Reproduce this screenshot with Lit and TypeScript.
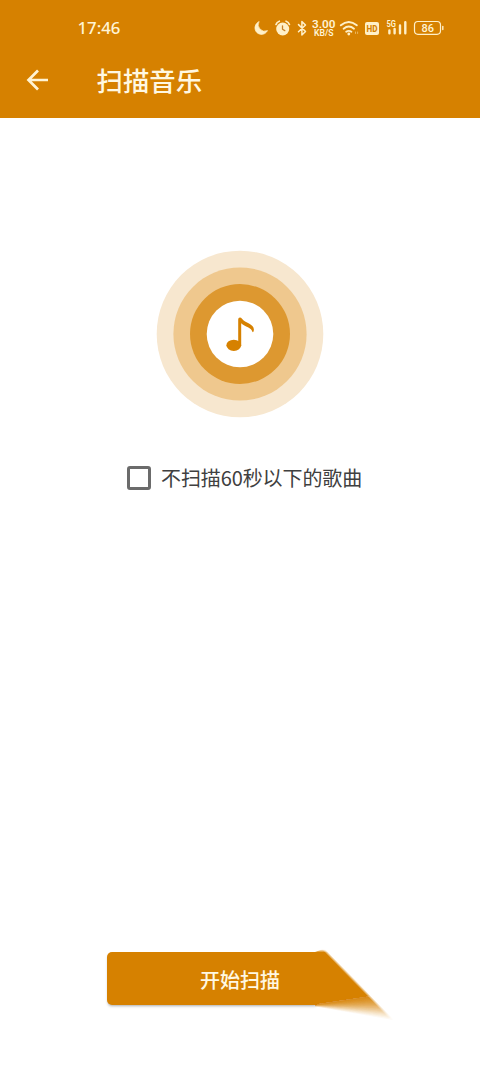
import { LitElement, html, svg, css } from "lit";
import { customElement, state } from "lit/decorators.js";

@customElement("status-bar")
class StatusBar extends LitElement {
  static styles = css`
    :host { display: flex; height: 36px; padding: 10px 36px 0 77.500px; align-items: center; justify-content: space-between; color: #fff4d4; }
    .time { font: 500 16.800px/36px "Noto Sans", sans-serif; }
    svg { display: block; }
    text { font-family: Roboto, sans-serif; fill: #fff4d4; }
    .rate { font-size: 11px; font-weight: 600; }
    .unit { font-size: 8.500px; font-weight: 600; }
    .hd { font-size: 9.500px; font-weight: 800; fill: #d68100; }
    .gen { font-size: 9px; font-weight: 600; }
    .level { font-size: 11px; font-weight: 500; }
  `;
  render() {
    return html`
      <span class="time">17:46</span>
      <svg width="191" height="36" viewBox="253 10 191 36" fill="none" stroke="#fff0c8" stroke-linecap="round" stroke-linejoin="round">
        <path d="M258.800 21.800A6.600 6.600 0 1 0 267.500 30.600A6.600 6.600 0 0 1 258.800 21.800Z" fill="#fff0c8" stroke-width=".7"/>
        <circle cx="282.700" cy="29" r="6.500" fill="#fff0c8" stroke="none"/>
        <path d="M276 24.500q.8-2.600 3.300-3.300M289.400 24.500q-.8-2.600-3.300-3.300" stroke-width="1.700"/>
        <path d="M282.500 25.800v3.500l2.300 1.300" stroke="#c88026" stroke-width="1.300"/>
        <path d="M298.500 24.600l7 6.900-3.600 3.500V21.600l3.600 3.400-7 6.800" stroke-width="1.500"/>
        <text class="rate" stroke="none" x="312" y="27.700" textLength="23.500" lengthAdjust="spacingAndGlyphs">3.00</text>
        <text class="unit" stroke="none" x="314" y="35.800" textLength="19.500" lengthAdjust="spacingAndGlyphs">KB/S</text>
        <path d="M340.800 25.300q8-6.800 16 0M343.600 28.700q5.200-4.200 10.400 0M346.200 31.800q2.600-1.900 5.200 0" stroke-width="1.900"/>
        <circle cx="348.800" cy="34" r="1.400" fill="#fff0c8" stroke="none"/>
        <path d="M355.500 32v1.500M357.600 32v1.500" stroke-width=".8" opacity=".6"/>
        <rect x="365" y="22" width="14" height="13" rx="2" fill="#fff0c8" stroke="none"/>
        <text class="hd" stroke="none" x="366.500" y="32" textLength="11" lengthAdjust="spacingAndGlyphs">HD</text>
        <text class="gen" stroke="none" x="386.500" y="27" textLength="9.500" lengthAdjust="spacingAndGlyphs">5G</text>
        <path d="M389.400 30.500v2.700M394.600 29v4.200M400 25.500v7.700M405.300 22.300v10.900" stroke-width="2.400"/>
        <rect x="414.500" y="21.500" width="26" height="12.800" rx="3.500" stroke-width="1.200"/>
        <path d="M442.800 26.500v3" stroke-width="1.400"/>
        <text class="level" stroke="none" x="421.500" y="32" textLength="12.500" lengthAdjust="spacingAndGlyphs">86</text>
      </svg>
    `;
  }
}

@customElement("scan-emblem")
class ScanEmblem extends LitElement {
  static styles = css`
    :host { display: block; width: 168px; height: 168px; }
    svg { display: block; }
  `;
  render() {
    return html`
      <svg width="168" height="168" viewBox="0 0 168 168">
        <circle cx="84" cy="84" r="83.300" fill="#f7e7cf"/>
        <circle cx="84" cy="84" r="66.600" fill="#efc88e"/>
        <circle cx="84" cy="84" r="50" fill="#dd9830"/>
        <circle cx="84" cy="84" r="33.300" fill="#fff"/>
        <ellipse cx="77.800" cy="95.300" rx="7.400" ry="5.600" fill="#d68100"/>
        <path d="M82.200 95.500V69.500Q82.200 67.500 83.900 67.500Q85.100 67.500 86 68.800C89 73 97.800 73.800 97.900 79.500Q98 82 96.600 82.300C95.800 77.300 88.800 76.800 85.200 73.200V95.500Z" fill="#d68100"/>
      </svg>
    `;
  }
}

const FEATHER = Array.from({ length: 20 }, (_, i) => i / 19);

@customElement("scan-button")
class ScanButton extends LitElement {
  static styles = css`
    :host { display: flex; align-items: flex-start; width: 373px; }
    .body { box-sizing: border-box; width: 210px; height: 53px; margin-top: 4px; padding: 0 0 0 93px; border: 0; border-radius: 5px 0 0 5px; background: #d68100; box-shadow: 0 2px 3px -1px #0005; color: #fff8e2; font: 500 20px/55px "Noto Sans CJK SC", sans-serif; text-align: left; white-space: nowrap; }
    svg { display: block; flex: none; margin-left: -2px; }
  `;
  render() {
    return html`
      <button class="body">开始扫描</button>
      <svg width="84" height="80" viewBox="0 0 84 80">
        <defs>
          <linearGradient id="edge" gradientUnits="userSpaceOnUse" x1="37" y1="32.500" x2="39" y2="30.550">
            <stop offset="0" stop-color="#fff"/>
            <stop offset="1" stop-color="#000"/>
          </linearGradient>
          <linearGradient id="cap" x2="0" y2="1">
            <stop offset="0" stop-color="#d68100" stop-opacity=".1"/>
            <stop offset="1" stop-color="#d68100"/>
          </linearGradient>
          <mask id="slope" maskUnits="userSpaceOnUse" x="0" y="0" width="84" height="80">
            <rect width="84" height="80" fill="url(#edge)"/>
          </mask>
        </defs>
        <g mask="url(#slope)">
          <path d="M0 4H84V44L0 56.500Z" fill="#d68100"/>
          <path d="M0 4L7 1.500H14V4.500H0Z" fill="url(#cap)"/>
          ${FEATHER.map((t) => svg`<path d=${`M0 56.4L84 43.900V${45 + t * 28}L0 ${56.6 + t * 2}Z`} fill="#d68100" fill-opacity=${0.05 + 0.14 * (1 - t)}/>`)}
        </g>
      </svg>
    `;
  }
}

@customElement("app-root")
class AppRoot extends LitElement {
  static styles = css`
    :host { display: flex; flex-direction: column; box-sizing: border-box; height: 1072px; overflow: hidden; background: #fff; font-family: "Noto Sans CJK SC", sans-serif; }
    header { flex: none; height: 117.500px; background: #d68100; }
    .bar { display: flex; align-items: center; height: 70px; padding-left: 26px; color: #fff8e2; }
    .back { display: block; margin-top: -2px; }
    h1 { margin: -2px 0 0 47.500px; font-size: 26.400px; line-height: 40px; font-weight: 500; }
    main { flex: 1; display: flex; flex-direction: column; align-items: center; padding-top: 132.500px; }
    .option { display: flex; align-items: center; gap: 10px; align-self: flex-start; margin: 44px 0 0 127px; height: 32px; font-size: 20px; line-height: 32px; color: #404040; white-space: nowrap; }
    .label { letter-spacing: -0.1px; }
    .box { box-sizing: border-box; width: 24px; height: 24px; border: 3px solid #6b6b6b; border-radius: 3px; }
    .box.on { background: #d68100; }
    footer { padding: 0 0 44px 107px; }
  `;
  @state() skipShort = false;
  render() {
    return html`
      <header>
        <status-bar></status-bar>
        <div class="bar">
          <svg class="back" width="23" height="22" viewBox="0 0 23 22" fill="none" stroke="#fff4d4" stroke-width="2.700">
            <path d="M22 11H3M12 1.500L2.500 11L12 20.500"/>
          </svg>
          <h1>扫描音乐</h1>
        </div>
      </header>
      <main>
        <scan-emblem></scan-emblem>
        <div class="option" @click=${() => (this.skipShort = !this.skipShort)}>
          <span class="box ${this.skipShort ? "on" : ""}"></span>
          <span class="label">不扫描60秒以下的歌曲</span>
        </div>
      </main>
      <footer><scan-button></scan-button></footer>
    `;
  }
}
